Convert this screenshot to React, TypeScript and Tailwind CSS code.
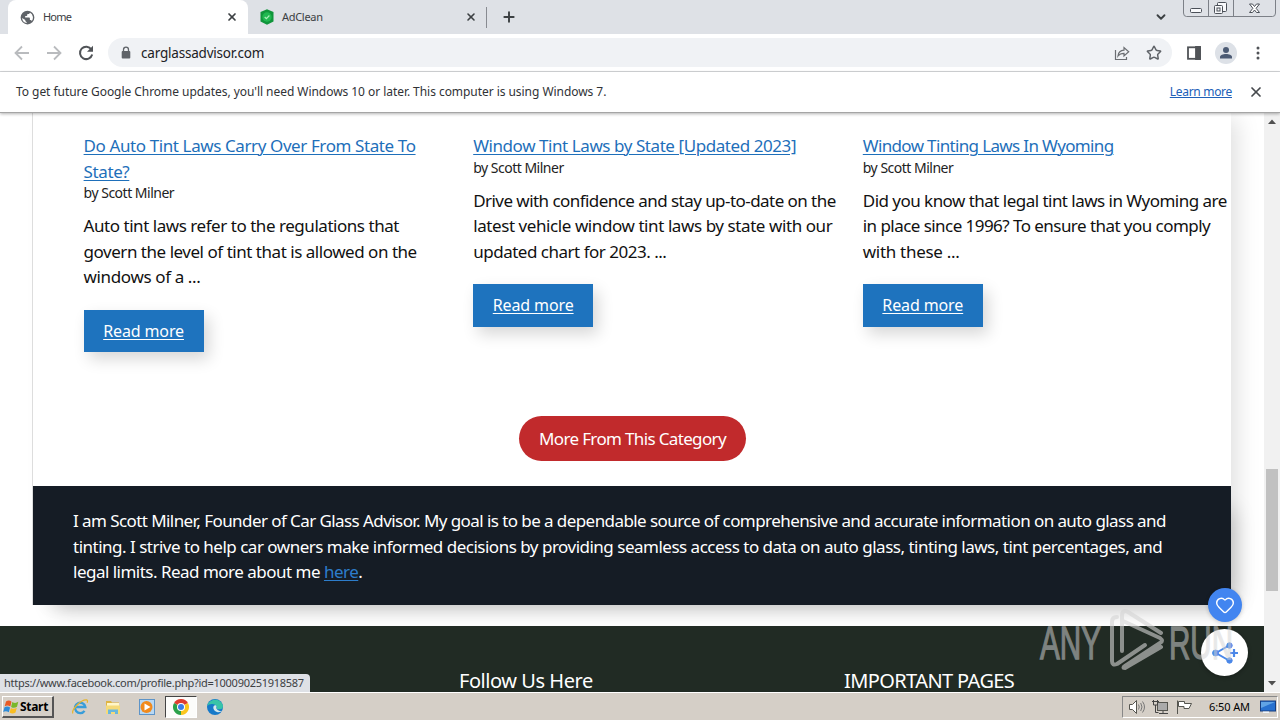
import React from 'react';
import { ChevronDown, Heart, Lock, Plus, Star, X } from 'lucide-react';

const posts = [
  {
    title: ['Do Auto Tint Laws Carry Over From State To', 'State?'],
    titleClass: 'tracking-[-0.4px]',
    excerpt: [
      { text: 'Auto tint laws refer to the regulations that', className: 'tracking-[-0.46px]' },
      { text: 'govern the level of tint that is allowed on the', className: 'tracking-[-0.47px]' },
      { text: 'windows of a ...', className: 'tracking-[-0.37px]' },
    ],
  },
  {
    title: ['Window Tint Laws by State [Updated 2023]'],
    titleClass: 'tracking-[-0.43px]',
    excerpt: [
      { text: 'Drive with confidence and stay up-to-date on the', className: 'tracking-[-0.55px]' },
      { text: 'latest vehicle window tint laws by state with our', className: 'tracking-[-0.42px]' },
      { text: 'updated chart for 2023. ...', className: 'tracking-[-0.49px]' },
    ],
  },
  {
    title: ['Window Tinting Laws In Wyoming'],
    titleClass: 'tracking-[-0.65px]',
    excerpt: [
      { text: 'Did you know that legal tint laws in Wyoming are', className: 'tracking-[-0.53px]' },
      { text: 'in place since 1996? To ensure that you comply', className: 'tracking-[-0.55px]' },
      { text: 'with these ...', className: 'tracking-[-0.3px]' },
    ],
  },
];

const GlobeIcon = () => (
  <svg className="h-[15px] w-[15px]" viewBox="0 0 24 24" fill="#5f6368">
    <path d="M12 1a11 11 0 1 0 0 22 11 11 0 0 0 0-22zM3.3 12.8l5.2 3.1v1.8l2.2 1.9v1.3a9 9 0 0 1-7.4-8.1zm15.600 4.8c-.5-1-1.200-1.500-2.200-1.500h-.9v-2.800c0-.8-.5-1.300-1.200-1.300H8.300V9.500h2.400l1-1V6.200h2.500l2-1.700a9 9 0 0 1 2.700 13.100z" />
  </svg>
);

const TabStrip = () => (
  <div className="flex h-[34px] bg-[#dee1e6] pl-2 text-[11px] text-[#3c4043]">
    <div className="relative flex w-60 items-center rounded-t-lg bg-white pr-2.5 pl-3">
      <GlobeIcon />
      <span className="ml-2 flex-1 tracking-[-0.8px]">Home</span>
      <X className="h-3 w-3" strokeWidth={3.4} />
    </div>
    <div className="flex w-[239px] items-center border-r border-[#888b91] bg-[#dee1e6] pr-[9px] pl-[11px] [border-image:linear-gradient(#dee1e6_23%,#888b91_23%,#888b91_80%,#dee1e6_80%)_1]">
      <svg className="h-4 w-4" viewBox="0 0 16 16">
        <path d="M8 .3 14.500 3v9.500L8 15.800 1.500 12.500V3z" fill="#10953b" />
        <circle cx="8" cy="8" r="4.700" fill="#20b850" />
        <path d="m5.700 8 1.700 1.700 3-3.200" fill="none" stroke="#a8efb9" strokeWidth="1.200" />
      </svg>
      <span className="ml-[7px] flex-1 tracking-[-0.3px]">AdClean</span>
      <X className="h-3 w-3" strokeWidth={3.2} />
    </div>
    <div className="flex flex-1 items-center pl-3.5">
      <Plus className="h-4 w-4" strokeWidth={2.9} />
    </div>
    <ChevronDown className="mt-2.5 mr-[15px] h-3.5 w-3.5" strokeWidth={3.2} />
    <svg className="mr-1 h-[17px] w-[93px]" viewBox="0 0 93 17" fill="none" stroke="#7c8087">
      <path d="M.5 0v13q0 3.500 3 3.500h86q3 0 3-3.500V0M25.500 0v16M50.500 0v16" />
      <rect x="7.500" y="8.500" width="11" height="4" rx="1" fill="#f8f9fb" stroke="#4b5058" />
      <g stroke="#4b5058" fill="#f8f9fb">
        <rect x="34.500" y="2.500" width="9" height="9" rx="1" />
        <rect x="31.500" y="5.500" width="8" height="8" rx="1" />
        <rect x="34" y="8" width="3" height="3" />
      </g>
      <path d="M66.500 4h3l2 2.500 2-2.500h3l-3.400 4.300 3.400 4.200h-3l-2-2.500-2 2.500h-3l3.400-4.200z" fill="#fff" stroke="#4b5058" />
    </svg>
  </div>
);

const ArrowIcon = ({ className }: { className: string }) => (
  <svg className={className} viewBox="0 0 16 16" fill="none" stroke="#b9bbbe" strokeWidth="1.800">
    <path d="M15 8H2M8 1.500 1.500 8 8 14.500" />
  </svg>
);

const Toolbar = () => (
  <div className="flex h-[38px] items-center border-b border-[#d5d7da] bg-white pr-3.5 pl-3.5">
    <ArrowIcon className="h-4 w-4" />
    <ArrowIcon className="ml-4 h-4 w-4 rotate-180" />
    <svg className="ml-4 h-4 w-4" viewBox="0 0 16 16" fill="none" stroke="#505357" strokeWidth="2">
      <path d="M13.400 4.500A6.200 6.200 0 1 0 14.200 9.500" />
      <path d="M15 .8v6H9z" fill="#505357" stroke="none" />
    </svg>
    <div className="ml-3.5 flex h-[29px] flex-1 items-center rounded-full bg-[#f0f2f5] pr-2.5 pl-3">
      <svg className="h-3.5 w-3" viewBox="0 0 12 14">
        <path d="M3.500 6V3.700a2.500 2.500 0 0 1 5 0V6" fill="none" stroke="#5f6368" strokeWidth="1.300" />
        <rect x="1.700" y="5" width="8.600" height="7.500" rx="1" fill="#5f6368" />
      </svg>
      <span className="ml-[9px] flex-1 pt-px text-[13.500px] tracking-[-0.2px] text-[#202124]">carglassadvisor.com</span>
      <svg className="h-4 w-4" viewBox="0 0 16 16" fill="none" stroke="#6b6e72" strokeWidth="1.200">
        <path d="M1.500 5v9.500h11V12" />
        <path d="M4 11c.5-4 2.500-5.700 6-5.800V2.500l4.700 4.300L10 11V8.300c-3 0-4.500.7-6 2.700z" />
      </svg>
      <Star className="ml-4 h-4 w-4 text-[#5f6368]" strokeWidth={2.2} />
    </div>
    <svg className="ml-3.5 h-4 w-4" viewBox="0 0 16 16" fill="none" stroke="#505357" strokeWidth="1.800">
      <rect x="2" y="2.300" width="12" height="11.500" />
      <path d="M10 2v12h4V2z" fill="#505357" />
    </svg>
    <div className="ml-[13px] flex h-[22px] w-[22px] items-center justify-center rounded-full bg-[#dde1e7]">
      <svg className="h-3.5 w-3.5" viewBox="0 0 14 14" fill="#4c5b74">
        <circle cx="7" cy="4" r="3" />
        <path d="M1 12.500V11c0-2 3-3 6-3s6 1 6 3v1.500z" />
      </svg>
    </div>
    <svg className="ml-[13px] h-4 w-4" viewBox="0 0 16 16" fill="#505357">
      <circle cx="8" cy="3" r="1.500" />
      <circle cx="8" cy="8" r="1.500" />
      <circle cx="8" cy="13" r="1.500" />
    </svg>
  </div>
);

const InfoBar = () => (
  <div className="relative z-10 flex h-[41px] items-center border-b border-[#a5a5a5] bg-white pr-4 pb-px pl-4 text-[12px] text-[#303236] shadow-[0_1px_3px_rgba(0,0,0,0.3)]">
    <span className="flex-1 tracking-[-0.05px] whitespace-nowrap">
      To get future Google Chrome updates, you'll need Windows 10 or later. This computer is using Windows 7.
    </span>
    <a className="tracking-[-0.3px] text-[#2060b8] underline">Learn more</a>
    <X className="ml-4 h-4 w-4 text-[#46494d]" strokeWidth={2.6} />
  </div>
);

type Post = (typeof posts)[number];

const PostCard = ({ post }: { post: Post }) => (
  <article className="w-[389.600px] shrink-0 whitespace-nowrap">
    <h2 className={`text-[17px] leading-[25.500px] text-[#1e6fba] underline decoration-1 underline-offset-2 ${post.titleClass}`}>
      {post.title.map((line) => (
        <span key={line} className="block w-max">{line}</span>
      ))}
    </h2>
    <div className="h-5 text-[14px] leading-[18px] tracking-[-0.5px] text-[#222]">by Scott Milner</div>
    <div className="mt-[9px] text-[17px] leading-[25.500px] text-[#111]">
      {post.excerpt.map((line) => (
        <div key={line.text} className={line.className}>{line.text}</div>
      ))}
    </div>
    <a className="mt-5 flex h-[42.500px] w-[120px] items-center justify-center bg-[#1e73be] text-[16px] tracking-[-0.12px] text-white underline decoration-1 underline-offset-2 shadow-[5px_7px_16px_rgba(0,0,0,0.16)]">
      Read more
    </a>
  </article>
);

const FloatingButtons = () => (
  <>
    <div className="absolute top-[475px] left-[1208px] flex h-[34px] w-[34px] items-center justify-center rounded-full bg-[#4285f0] shadow-[0_1px_4px_rgba(0,0,0,0.2)]">
      <Heart className="h-5 w-5 text-white" strokeWidth={1.700} />
    </div>
    <div className="absolute top-[516px] left-[1201px] flex h-[47px] w-[47px] items-center justify-center rounded-full bg-white shadow-[0_1px_4px_rgba(0,0,0,0.3)]">
      <svg className="h-7 w-7" viewBox="0 0 28 28" fill="#4a87e8" stroke="#4a87e8">
        <path d="M18 6.500 5 14l13 7.500" fill="none" strokeWidth="2" />
        <circle cx="18.500" cy="6.500" r="2.700" />
        <circle cx="4.500" cy="14" r="2.900" />
        <circle cx="18.500" cy="21.500" r="2.700" />
        <path d="M19 14h8M23 10v8" strokeWidth="2.200" />
      </svg>
    </div>
  </>
);

const Watermark = () => (
  <svg className="absolute top-[494px] left-[1036px] h-[68px] w-[204px]" viewBox="0 0 204 68">
    <g fill="#d4d4d4" stroke="#d4d4d4" strokeWidth="1.300" opacity="0.52" fontFamily="Liberation Sans Narrow, Liberation Sans, sans-serif" fontSize="47">
      <text x="4" y="52" textLength="61" lengthAdjust="spacingAndGlyphs">ANY</text>
      <text x="133" y="52" textLength="64" lengthAdjust="spacingAndGlyphs">RUN</text>
    </g>
    <g fill="none" stroke="#d4d4d4" opacity="0.6" strokeWidth="4" strokeLinejoin="round" strokeLinecap="round">
      <path d="M81 10q-5 0-5 5v39q0 5 5 3l28-19" />
      <path d="M86 44V9q0-7 6-4l33 21M87 14l37 17q4 3 0 5L89 59q-3 2 0 2l36-21" />
    </g>
  </svg>
);

const Page = () => (
  <div className="relative flex h-[579px] overflow-hidden bg-white">
    <main className="w-[1264px]">
      <div className="ml-8 w-[1199px] border-l border-[#ddd] shadow-[12px_0_22px_-6px_rgba(0,0,0,0.13)]">
        <div className="flex h-[303px] pt-5 pl-[50.600px]">
          {posts.map((post) => (
            <PostCard key={post.title[0]} post={post} />
          ))}
        </div>
        <div className="h-[70px] pl-[486px]">
          <a className="flex h-[45px] w-[227px] items-center justify-center rounded-full bg-[#c12a2c] text-[17px] tracking-[-0.65px] text-white">
            More From This Category
          </a>
        </div>
        <div className="h-[119px] bg-[#151c25] pt-[22px] pl-10 text-[17px] leading-[25.500px] whitespace-nowrap text-white shadow-[12px_14px_20px_-10px_rgba(0,0,0,0.22)]">
          <div className="tracking-[-0.573px]">I am Scott Milner, Founder of Car Glass Advisor. My goal is to be a dependable source of comprehensive and accurate information on auto glass and</div>
          <div className="tracking-[-0.5px]">tinting. I strive to help car owners make informed decisions by providing seamless access to data on auto glass, tinting laws, tint percentages, and</div>
          <div className="tracking-[-0.51px]">
            legal limits. Read more about me <a className="text-[#2d7dcb] underline decoration-1 underline-offset-2">here</a>.
          </div>
        </div>
      </div>
      <footer className="mt-[21px] flex h-[66px] bg-[#212b24] pt-11 pl-[459px] text-[20px] leading-[22px] whitespace-nowrap text-white">
        <h3 className="w-[385px] tracking-[-0.45px]">Follow Us Here</h3>
        <h3 className="tracking-[-0.6px]">IMPORTANT PAGES</h3>
      </footer>
    </main>
    <div className="flex w-4 flex-col items-center bg-[#f1f1f1]">
      <svg className="h-[17px] w-4" viewBox="0 0 16 17"><path d="m4 11 4-4.500 4 4.500z" fill="#505050" /></svg>
      <div className="mt-[339px] h-[122px] w-3 bg-[#c1c1c1]" />
      <div className="flex-1" />
      <svg className="h-[17px] w-4" viewBox="0 0 16 17"><path d="m4 6 4 4.500L12 6z" fill="#505050" /></svg>
    </div>
    <FloatingButtons />
    <Watermark />
    <div className="absolute bottom-0 left-0 h-[18px] w-[310px] rounded-tr bg-[#dee1e6] pl-1 text-[11px] leading-[18px] tracking-[-0.27px] whitespace-nowrap text-[#3c4043]">
      https://www.facebook.com/profile.php?id=100090251918587
    </div>
  </div>
);

const Taskbar = () => (
  <div className="flex h-7 items-center border-t border-white bg-[#d5cfc7] pt-px text-[11px] text-black">
    <div className="ml-0.5 flex h-[22px] w-[52px] items-center border-t border-r-2 border-b-2 border-l border-t-white border-r-[#555] border-b-[#555] border-l-white">
      <svg className="h-4 w-4 shrink-0" viewBox="0 0 16 16">
        <path d="M3 2.500q3-2 5.500.2L7.300 7.500q-2.700-2-5.600-.3z" fill="#e85a25" />
        <path d="M9.300 3q3 2 6-.2L14 7.700q-3 2-5.900.2z" fill="#79b82a" />
        <path d="M1.500 8.200q2.800-1.600 5.600.3l-1.300 4.800Q3 11.500.2 13z" fill="#2d8bd8" />
        <path d="M7.900 8.900q3 1.800 5.900-.2l-1.300 4.800q-3 2-5.900.1z" fill="#f9bd22" />
      </svg>
      <b className="ml-px text-[12px] tracking-[-0.3px]">Start</b>
    </div>
    <svg className="ml-[17px] h-[18px] w-[18px]" viewBox="0 0 18 18" fill="none">
      <path d="M13.500 12.800A5.200 5.200 0 1 1 14.300 9H5" stroke="#389dd9" strokeWidth="2.400" />
      <path d="M2 15.500C-1 13 10 1 16 2q1 .5.200 2.800" stroke="#e7b52c" strokeWidth="1.300" />
    </svg>
    <svg className="ml-[15px] h-[18px] w-[18px]" viewBox="0 0 18 18">
      <path d="M2 3h5l1 1.500h7V15H2z" fill="#dfb443" />
      <path d="M3 5h12v5H3z" fill="#fff6c8" />
      <path d="M2 7.500h14V16H2z" fill="#f5da79" />
      <path d="M4 16v-4.500h10V16h-3v-2H7v2z" fill="#69b7dc" />
    </svg>
    <svg className="ml-4 h-[18px] w-[18px]" viewBox="0 0 18 18">
      <rect x="1.500" y="1.500" width="15" height="15" fill="#b8d8f3" stroke="#5d94c8" />
      <circle cx="8.500" cy="9" r="6" fill="#f18a1c" />
      <path d="m6.500 5.500 6 3.500-6 3.500z" fill="#fff" />
    </svg>
    <div className="ml-[9px] flex h-[22px] w-8 items-center justify-center border border-t-[#444] border-r-white border-b-white border-l-[#444] bg-[#fcfcfa]">
      <svg className="h-4 w-4" viewBox="0 0 16 16">
        <path d="M8 8 1.070 4A8 8 0 0 1 14.930 4z" fill="#df3d30" />
        <path d="M8 8 14.930 4A8 8 0 0 1 8 16z" fill="#fbc61d" />
        <path d="M8 8v8A8 8 0 0 1 1.070 4z" fill="#2ba14a" />
        <circle cx="8" cy="8" r="4" fill="#fff" />
        <circle cx="8" cy="8" r="3" fill="#3b7de8" />
      </svg>
    </div>
    <svg className="ml-[9px] h-[18px] w-[18px]" viewBox="0 0 18 18">
      <circle cx="9" cy="9" r="8" fill="#1679c9" />
      <path d="M1.200 8C2.500.5 14-1 16.800 7c1 4-3 5-6 4 1-3-2-5-5-5-2 0-3.600.7-4.600 2z" fill="#38c4a8" />
      <path d="M10.800 11c-1.300-1 .5-2.200-.7-3.500C7 6 5.500 12 11 14c2 .6 4-.3 5.300-1.200-1.500.5-4.300.2-5.500-1.800z" fill="#d5e8ec" />
    </svg>
    <div className="flex-1" />
    <div className="mr-0.5 flex h-[22px] w-[156px] items-center border border-t-[#888] border-r-white border-b-white border-l-[#888]">
      <svg className="ml-[5px] h-4 w-[66px]" viewBox="0 0 66 16" fill="none" stroke="#55554f">
        <path d="M1.500 5.500h3l4-4v13l-4-4h-3z" fill="#fff" />
        <path d="M10.500 5.500q1.500 2.500 0 5M12.700 4q2.600 4 0 8M14.500 2.500q4 5.500 0 11" stroke="#777" />
        <rect x="29.500" y="3.500" width="10" height="8" fill="#aaa" />
        <path d="M31 14.500h9M35 12v2M25.500 1v5h4V1M24 2.500h7M27.500 6v7.500h3" stroke="#444" />
        <path d="M49.500 15V1.500" />
        <path d="M50.500 2.500h6v2h7l-2.500 5h-5v-2h-5.500z" fill="#fff" />
      </svg>
      <span className="ml-[15px] flex-1 tracking-[-0.1px] whitespace-nowrap">6:50 AM</span>
      <svg className="mr-px h-4 w-4" viewBox="0 0 16 16">
        <rect x=".5" y="2" width="15" height="10" fill="#2871cf" stroke="#173e80" />
        <path d="M1 3h14L1 9z" fill="#61a4e5" />
        <path d="M3 12.500h6v1.500H3z" fill="#eef4fb" />
      </svg>
    </div>
  </div>
);

const App = () => (
  <div className="h-[720px] w-[1280px] overflow-hidden bg-white font-['Noto_Sans',sans-serif]">
    <TabStrip />
    <Toolbar />
    <InfoBar />
    <Page />
    <Taskbar />
  </div>
);

export default App;
